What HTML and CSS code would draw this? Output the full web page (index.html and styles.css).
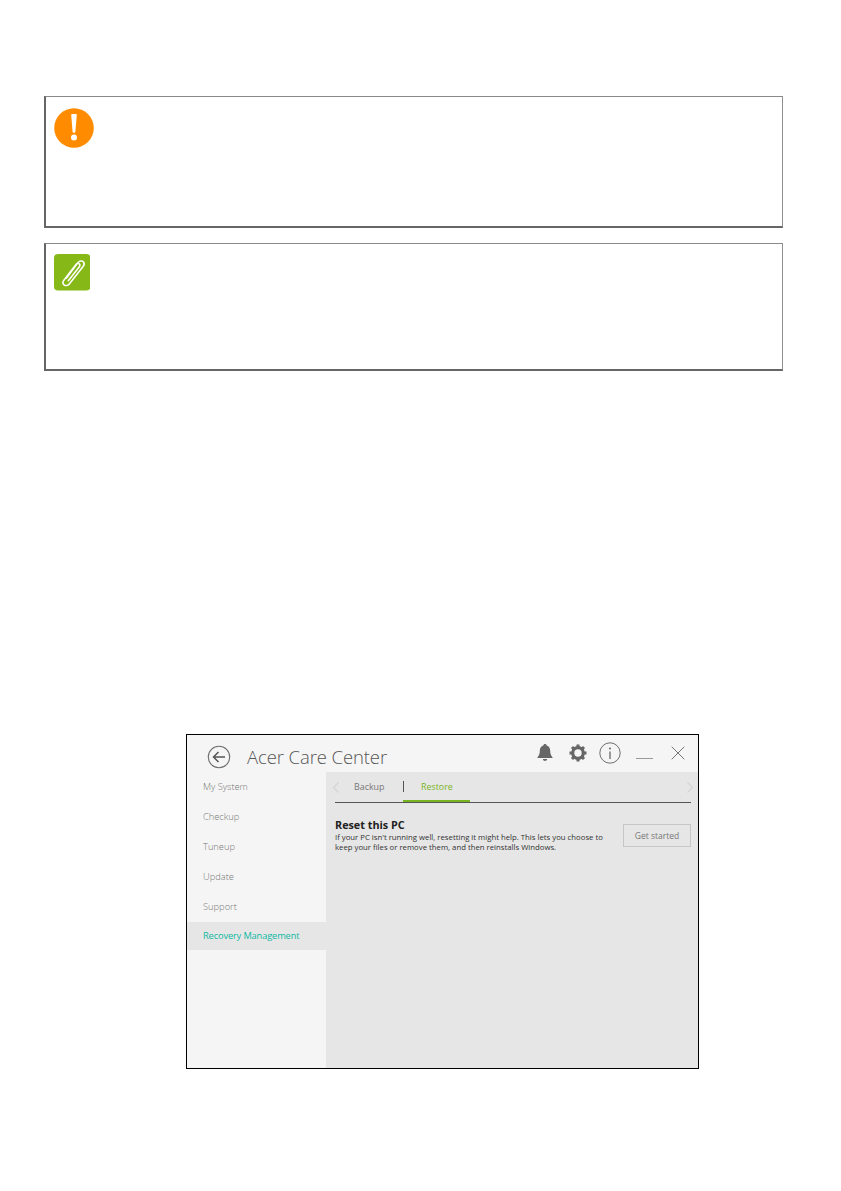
FILE: index.html
```html
<!DOCTYPE html>
<html lang="en">
<head>
<meta charset="utf-8">
<title>Acer Care Center</title>
<link rel="stylesheet" href="styles.css">
</head>
<body>
<main class="page">
  <section class="notice">
    <svg class="notice-icon" width="40" height="40" viewBox="0 0 40 40" aria-hidden="true">
      <circle cx="20" cy="20" r="19.800" fill="#ff8c00"/>
      <path d="M18.200 6h3.600c.6 0 1 .5 1 1.100l-1.400 16.700c-.1.600-.5 1-1.400 1s-1.300-.4-1.400-1L17.200 7.100c0-.6.400-1.100 1-1.100z" fill="#fff"/>
      <circle cx="20" cy="29.500" r="3" fill="#fff"/>
    </svg>
  </section>
  <section class="notice">
    <svg class="notice-icon note-icon" width="37" height="37" viewBox="0 0 37 37" aria-hidden="true">
      <rect width="37" height="37" rx="4" fill="#86b817"/>
      <path d="M12.500 24.500 24.500 8.500c1.500-1.900 4.200-1.700 5.200-.7 1.100 1.100 1.200 3-.2 4.900L15.500 30.500c-1.400 1.600-3.800 2-5.300.8-1.400-1.100-1.300-3.200-.2-4.800L22.500 10.500c.8-1 2.100-1.300 3-.6.9.7.900 1.900.2 3L14.500 27" fill="none" stroke="#fff" stroke-width="1.600" stroke-linecap="round" stroke-linejoin="round"/>
    </svg>
  </section>

  <section class="window">
    <header class="titlebar">
      <svg class="back" width="24" height="24" viewBox="0 0 24 24" aria-hidden="true">
        <circle cx="12" cy="12" r="10.700" fill="none" stroke="#6f6f6f" stroke-width="1.100"/>
        <path d="M18 12H6.500M11.500 7l-5 5 5 5" fill="none" stroke="#555" stroke-width="1.500"/>
      </svg>
      <h1 class="app-title">Acer Care Center</h1>
      <div class="tools">
        <svg class="bell" width="18" height="19" viewBox="0 0 18 19" aria-hidden="true">
          <path d="M9 1c1 0 1.600.6 1.700 1.500 2.400.7 3.500 2.800 3.500 5.500 0 3 .8 4.500 2.300 6.300v.7H1.500v-.7C3 12.500 3.800 11 3.800 8c0-2.700 1.100-4.800 3.500-5.500C7.400 1.600 8 1 9 1zM6.800 16h4.400c-.2 1.200-1.100 2-2.200 2s-2-.8-2.200-2z" fill="#666"/>
        </svg>
        <svg class="gear" width="18" height="18" viewBox="0 0 18 18" aria-hidden="true">
          <circle cx="9" cy="9" r="5.300" fill="none" stroke="#666" stroke-width="3.200"/>
          <path d="M9 .5v3M9 14.500v3M.5 9h3M14.500 9h3M3 3l2.100 2.100M12.900 12.900 15 15M15 3l-2.100 2.100M5.100 12.900 3 15" stroke="#666" stroke-width="3"/>
        </svg>
        <svg class="info" width="22" height="22" viewBox="0 0 22 22" aria-hidden="true">
          <circle cx="11" cy="11" r="10.200" fill="none" stroke="#6f6f6f" stroke-width="1"/>
          <circle cx="11" cy="6.500" r="1" fill="#666"/>
          <path d="M11 9.500v7.500" stroke="#666" stroke-width="1.300"/>
        </svg>
        <span class="minimize"></span>
        <svg class="close" width="14" height="14" viewBox="0 0 14 14" aria-hidden="true">
          <path d="M.7.700l12.600 12.600M13.300.700.700 13.300" stroke="#777" stroke-width="1"/>
        </svg>
      </div>
    </header>
    <div class="app-body">
      <nav class="sidebar">
        <a class="nav-item">My System</a>
        <a class="nav-item">Checkup</a>
        <a class="nav-item">Tuneup</a>
        <a class="nav-item">Update</a>
        <a class="nav-item">Support</a>
        <a class="nav-item active">Recovery Management</a>
      </nav>
      <div class="content">
        <div class="tabs">
          <svg class="chevron" width="6" height="11" viewBox="0 0 6 11" aria-hidden="true"><path d="M5.500.500l-5 5 5 5" fill="none" stroke="#d4d4d4" stroke-width="1.200"/></svg>
          <span class="tab tab-backup">Backup</span>
          <span class="tab tab-restore">Restore</span>
          <svg class="chevron chevron-right" width="6" height="11" viewBox="0 0 6 11" aria-hidden="true"><path d="M.500.500l5 5-5 5" fill="none" stroke="#d4d4d4" stroke-width="1.200"/></svg>
        </div>
        <div class="reset">
          <div class="reset-text">
            <h2 class="reset-title">Reset this PC</h2>
            <p class="reset-desc">If your PC isn't running well, resetting it might help. This lets you choose to<br>keep your files or remove them, and then reinstalls Windows.</p>
          </div>
          <button class="get-started" type="button">Get started</button>
        </div>
      </div>
    </div>
  </section>
</main>
</body>
</html>
```
FILE: styles.css
```css
* { box-sizing: border-box; }
html, body { margin: 0; padding: 0; background: #fff; }
body { font-family: "Open Sans", "Noto Sans", sans-serif; }

.page {
  width: 841px;
  height: 1191px;
  padding: 96px 0 0 44px;
  overflow: hidden;
}

.notice {
  width: 739px;
  height: 132px;
  margin-bottom: 15px;
  border-style: solid;
  border-color: #8a8a8a #8f8f8f #666 #666;
  border-width: 1px 1px 2px 2px;
  padding: 10.500px 0 0 7.500px;
}
.notice-icon { display: block; }
.notice + .notice { height: 128px; }
.note-icon { margin-top: -.5px; width: 36.500px; height: 36.500px; }

.window {
  width: 513px;
  height: 335px;
  margin: 363px 0 0 142px;
  border: 1.500px solid #000;
  background: #f5f5f5;
  display: flex;
  flex-direction: column;
}

.titlebar {
  height: 37px;
  flex: none;
  display: flex;
  align-items: center;
  padding: 6px 0 0 20px;
}
.back { flex: none; }
.app-title {
  margin: 1px 0 0 16px;
  font-size: 18.500px;
  font-weight: 300;
  line-height: 26px;
  color: #555;
  letter-spacing: -.1px;
}
.tools {
  margin-left: auto;
  display: flex;
  align-items: center;
  padding-right: 13px;
  margin-top: -8px;
}
.bell { margin-right: 15px; }
.gear { margin-right: 12px; }
.info { margin: 1px 15px 0 0; }
.minimize {
  display: block;
  width: 17px;
  height: 1px;
  background: #999;
  margin: 12px 18px 0 0;
}

.app-body { flex: 1; display: flex; min-height: 0; }

.sidebar {
  width: 139px;
  flex: none;
  display: flex;
  flex-direction: column;
}
.nav-item {
  display: block;
  height: 29.950px;
  line-height: 29px;
  padding-left: 16px;
  font-size: 9.300px;
  font-weight: 300;
  color: #777;
}
.nav-item.active {
  background: #e6e6e6;
  color: #0fb8a3;
  font-weight: 400;
  letter-spacing: -.15px;
  height: 28px;
  line-height: 28px;
}

.content {
  flex: 1;
  background: #e6e6e6;
  padding: 0 7px 0 9px;
}

.tabs {
  height: 31px;
  position: relative;
  display: flex;
  align-items: center;
  border-bottom: 1px solid #555;
}
.chevron { flex: none; margin: 1px 0 0 -2px; }
.chevron-right { margin-left: auto; margin-right: -2px; }
.tab {
  font-size: 8.900px;
  font-weight: 400;
  line-height: 29px;
  height: 30px;
  color: #777;
}
.tab-backup { margin-left: 15px; width: 49px; }
.tab-restore {
  width: 67px;
  padding-left: 18px;
  color: #7ab51d;
  border-bottom: 2px solid #77b520;
  position: relative;
}
.tab-restore::before {
  content: "";
  position: absolute;
  left: 0;
  top: 9px;
  width: 1px;
  height: 11px;
  background: #555;
}

.reset {
  display: flex;
  justify-content: space-between;
  align-items: flex-start;
  padding-top: 15px;
}
.reset-title {
  margin: 0;
  font-size: 10.800px;
  font-weight: 700;
  line-height: 14px;
  color: #222;
}
.reset-desc {
  margin: 0;
  font-size: 7.750px;
  line-height: 10px;
  color: #333;
}
.get-started {
  width: 68px;
  height: 23px;
  margin-top: 6px;
  padding: 0;
  background: transparent;
  border: 1px solid #c6c6c6;
  font-family: inherit;
  font-size: 8.500px;
  font-weight: 400;
  color: #777;
}
```
